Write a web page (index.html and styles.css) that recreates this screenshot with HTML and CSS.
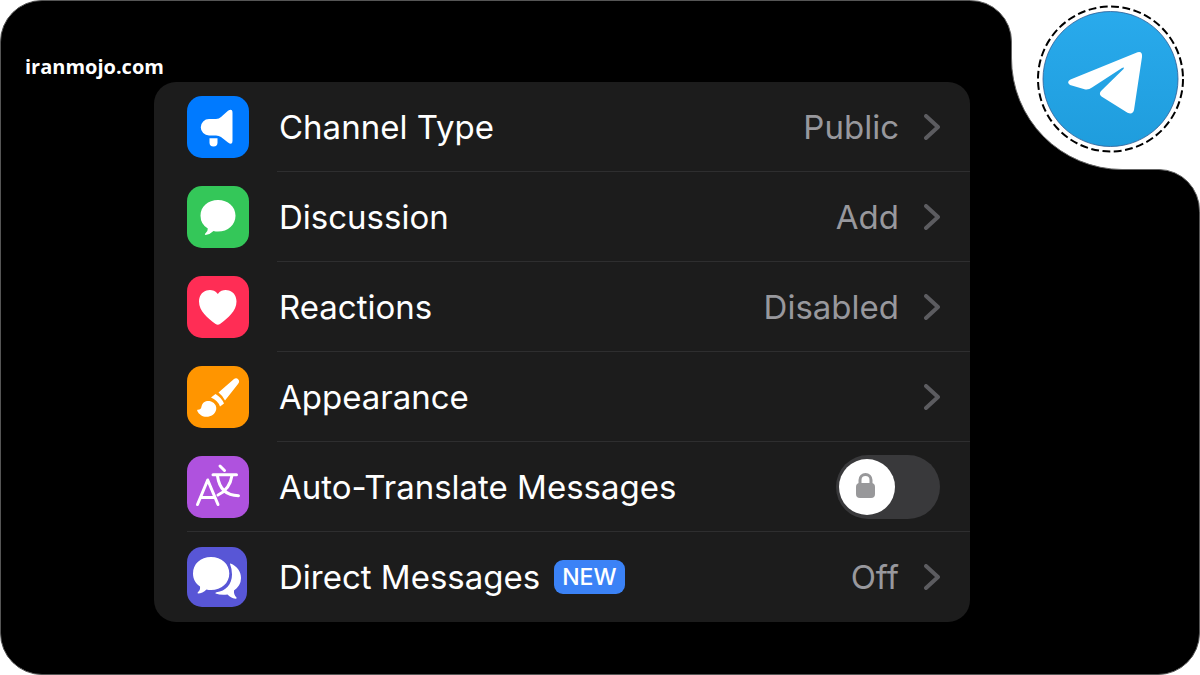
FILE: index.html
```html
<!DOCTYPE html>
<html lang="en">
<head>
  <meta charset="utf-8">
  <title>Channel settings</title>
  <link rel="stylesheet" href="styles.css">
</head>
<body>

<div class="frame">

  <header class="brand">iranmojo.com</header>

  <svg class="corner" viewBox="0 0 230 212" aria-label="Telegram">
    <defs>
      <linearGradient id="sky" x1="0" y1="0" x2="0" y2="1">
        <stop offset="0" stop-color="#29aaec"/>
        <stop offset="1" stop-color="#1f9ddd"/>
      </linearGradient>
    </defs>
    <path fill="#fff" stroke="#666" d="M-1 .5H0A41 41 0 0 1 41.500 42V58A111 111 0 0 0 152 169.500H189A41 41 0 0 1 229.500 211V213H240V-9H-1Z"/>
    <circle cx="140.500" cy="79" r="72.500" fill="none" stroke="#000" stroke-width="2" stroke-dasharray="7.900 3.490"/>
    <circle cx="140.500" cy="79" r="67.500" fill="url(#sky)" stroke="#2c5c94" stroke-width=".8"/>
    <path fill="#fff" d="M100.500 79.500L167.500 52.300Q172.600 51 172 57L164 110Q162.800 115 157.500 112.800L131.500 96.500Q128.500 94 131 91L153.500 69Q155 66.800 152 68L122 87.600Q118.500 90.200 114.500 89.300L100 85Q96 82 100.500 79.500Z"/>
  </svg>

  <main>
    <ul class="panel">

      <li>
        <button type="button" class="row">
          <svg class="icon blue" viewBox="0 0 62 62">
            <path d="M22 23H29Q32 23 34 21L41 14.800Q45.500 12 45.500 17V45Q45.500 49.500 41 46.500L34 41Q32 39.500 29 39.500H22A8.200 8.200 0 0 1 22 23Z"/>
            <path d="M22.500 42.200H30.500V46.500A4 4 0 0 1 22.500 46.500Z"/>
          </svg>
          <span class="title">Channel Type</span>
          <span class="value">Public</span>
          <svg class="chevron" viewBox="0 0 16 26"><path d="M2 2L14 13L2 24"/></svg>
        </button>
      </li>

      <li>
        <button type="button" class="row">
          <svg class="icon green" viewBox="0 0 62 62">
            <path d="M31 14C41 14 48.500 20.500 48.500 29.700S41 45.500 31 45.500Q28.500 45.500 26.500 45Q23 48.500 18.500 48.900Q17.200 48.500 18.300 47.500Q21 45.500 20.800 42.500Q13.500 38 13.500 29.700C13.500 20.500 21 14 31 14Z"/>
          </svg>
          <span class="title">Discussion</span>
          <span class="value">Add</span>
          <svg class="chevron" viewBox="0 0 16 26"><path d="M2 2L14 13L2 24"/></svg>
        </button>
      </li>

      <li>
        <button type="button" class="row">
          <svg class="icon red" viewBox="0 0 62 62">
            <path d="M30.800 18C34 13.500 39 13.500 42 14.500C47 16 49.500 20.500 49.500 25.500C49.500 35 41 42 33 48Q30.800 49.500 28.600 48C20.500 42 12 35 12 25.500C12 20.500 14.500 16 19.500 14.500C22.500 13.500 27.500 13.500 30.800 18Z"/>
          </svg>
          <span class="title">Reactions</span>
          <span class="value">Disabled</span>
          <svg class="chevron" viewBox="0 0 16 26"><path d="M2 2L14 13L2 24"/></svg>
        </button>
      </li>

      <li>
        <button type="button" class="row">
          <svg class="icon orange" viewBox="0 0 62 62">
            <path d="M31.500 26.500L47 13Q49.500 11.500 51.300 13.500T51 18L38 34.500Q36 30 31.500 26.500Z"/>
            <path d="M28.500 28Q34.500 31.500 37 37.500L33 40.500Q31 34.500 24 31.500Z"/>
            <path d="M10.500 43.800Q14 44 14.500 40.500C15.500 36 19 34.500 22.500 35C27 36 30 39.500 29.200 43.500C28 48.500 24 50.800 19.500 50.800C15.500 50.800 12 48.500 10.300 45Q10 43.700 10.500 43.800Z"/>
          </svg>
          <span class="title">Appearance</span>
          <svg class="chevron" viewBox="0 0 16 26"><path d="M2 2L14 13L2 24"/></svg>
        </button>
      </li>

      <li class="wide">
        <label class="row">
          <svg class="icon purple lines" viewBox="0 0 62 62">
            <path d="M10.500 48.500L20.700 24L31 48.500M14 41.500H28"/>
            <path d="M33 10L37.500 14.500M26 18.800H49.500M30.500 20C32 31 38 39.500 51.500 39.700M45 19.500C43.500 29 38.500 35.500 31 39"/>
          </svg>
          <span class="title">Auto-Translate Messages</span>
          <span class="toggle">
            <input type="checkbox">
            <svg class="lock" viewBox="0 0 20 26">
              <rect x="0" y="10" width="19" height="15" rx="4"/>
              <path d="M4 12V7A5.500 5.500 0 0 1 15 7V12"/>
            </svg>
          </span>
        </label>
      </li>

      <li>
        <button type="button" class="row">
          <svg class="icon indigo" viewBox="0 0 60 60">
            <path d="M24 10C34.500 10 42.300 17 42.300 26.500S34.500 43 24 43Q21.500 43 19.500 42.500Q15.500 46.500 11 46.500Q10 46 11 45Q13.500 43 13 39.500C8.500 36.500 6 32 6 26.500C6 17 13.500 10 24 10Z"/>
            <path d="M43.500 16.500C50 19 54 24.500 54 31Q54 38.500 47 43.500Q46.500 47.500 49.500 50.500Q50 51.800 48.500 51.700Q43.500 51 40.500 47.500Q34 48.500 28.500 46.500Q28 45.500 29.500 45.300C38.500 44 45 37.500 45 27.500Q45 22 43 17Q43 16.300 43.500 16.500Z"/>
          </svg>
          <span class="title">Direct Messages <span class="badge">NEW</span></span>
          <span class="value">Off</span>
          <svg class="chevron" viewBox="0 0 16 26"><path d="M2 2L14 13L2 24"/></svg>
        </button>
      </li>

    </ul>
  </main>

</div>

</body>
</html>
```

FILE: styles.css
```css
* { box-sizing: border-box; }

body { margin: 0; background: #fff; }

.frame {
  position: relative;
  min-height: 100vh;
  padding-bottom: 52px;
  border: 1px solid #555;
  border-radius: 42px;
  background: #000;
  color: #fff;
}

.brand {
  height: 81px;
  padding: 52px 24px 0;
  font: bold 20px/28px "Open Sans", sans-serif;
}

.corner {
  position: absolute;
  top: -1px; right: -1px;
  width: 230px; height: 212px;
}

main { padding: 0 229px 0 153px; }

.panel {
  margin: 0;
  padding: 0;
  list-style: none;
  overflow: hidden;
  border-radius: 22px;
  background: #1c1c1c;
}

.panel li { position: relative; }

/* hairline between the rows */
.panel li::after {
  content: "";
  position: absolute;
  left: 123px; right: 0; bottom: 0;
  height: 1px;
  background: #2e2e2f;
}
.panel li.wide::after { left: 33px; }
.panel li:last-child::after { display: none; }

.row {
  display: flex;
  align-items: center;
  width: 100%;
  height: 90px;
  padding: 0 30px 0 33px;
  border: 0;
  background: none;
  color: #fff;
  font: 33px/44px Inter, sans-serif;
  text-align: left;
}

.icon {
  flex: none;
  width: 62px; height: 62px;
  margin-right: 30px;
  border-radius: 15px;
  fill: #fff;
}
.blue { background: #007aff; }
.green { background: #34c759; }
.red { background: #ff2d55; }
.orange { background: #ff9500; }
.purple { background: #af52de; }
.indigo {
  width: 60px; height: 60px;
  margin-right: 32px;
  background: #5856d6;
}

.lines {
  fill: none;
  stroke: #fff;
  stroke-width: 3;
  stroke-linecap: round;
  stroke-linejoin: round;
}

.title {
  display: flex;
  align-items: center;
  gap: 14px;
  flex: 1;
  white-space: nowrap;
}

.value { color: #98989d; }

.badge {
  padding: 0 8px;
  border-radius: 9px;
  background: #3b82f6;
  font: 500 23px/34px Inter, sans-serif;
}

.chevron {
  flex: none;
  width: 16px; height: 26px;
  margin-left: 25px;
  fill: none;
  stroke: #5c5c60;
  stroke-width: 4;
  stroke-linecap: round;
  stroke-linejoin: round;
}

.toggle { position: relative; height: 64px; }

.toggle input {
  appearance: none;
  display: block;
  width: 104px; height: 64px;
  margin: 0;
  border-radius: 32px;
  background: #39393b;
}
.toggle input::before {
  content: "";
  display: block;
  width: 56px; height: 56px;
  margin: 4px 3px;
  float: left;
  border-radius: 50%;
  background: #fff;
}
.toggle input:checked::before { float: right; }

.lock {
  position: absolute;
  left: 20px; top: 18px;
  width: 20px; height: 26px;
  fill: #98989a;
}
.lock path { fill: none; stroke: #98989a; stroke-width: 3; }
```
